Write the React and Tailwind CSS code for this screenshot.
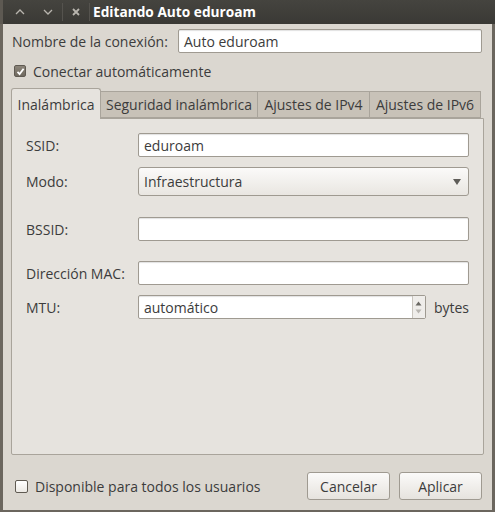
import React from 'react';

const font = { fontFamily: '"Open Sans", "Noto Sans", sans-serif' };

function TextInput({ value, className = '' }) {
  return (
    <div className={`h-[24px] bg-white border border-[#9f9a91] rounded-[2px] shadow-[inset_0_1px_1px_rgba(0,0,0,0.12)] flex items-center px-[5px] text-[#3c3c3c] ${className}`}>
      {value}
    </div>
  );
}

function Check({ checked }) {
  return checked ? (
    <div className="w-[12px] h-[12px] rounded-[2px] border border-[#5f5a52] bg-gradient-to-b from-[#8c857a] to-[#6f695f] flex items-center justify-center">
      <svg width="9" height="9" viewBox="0 0 9 9">
        <path d="M1.5 4.8 L3.6 7 L7.6 1.8" stroke="#ffffff" strokeWidth="1.8" fill="none" />
      </svg>
    </div>
  ) : (
    <div className="w-[13px] h-[13px] rounded-[2px] border border-[#5f5a52] bg-gradient-to-b from-white to-[#ece9e4]" />
  );
}

function Row({ label, children, className = '' }) {
  return (
    <div className={`flex items-center ${className}`}>
      <div className="w-[112px] shrink-0">{label}</div>
      {children}
    </div>
  );
}

export default function App() {
  return (
    <div className="w-[495px] h-[512px] flex flex-col bg-[#dbd7d0] text-[14px] text-[#3c3c3c] overflow-hidden" style={font}>
      <div className="h-[24px] shrink-0 bg-gradient-to-b from-[#45443f] to-[#3a3935] flex items-center border-l-[3px] border-[#5d5952]">
        <div className="flex items-center h-[18px] ml-[3px] text-[#b8b5ae]">
          <div className="w-[28px] flex justify-center">
            <svg width="10" height="6" viewBox="0 0 10 6"><path d="M1 5 L5 1 L9 5" stroke="currentColor" strokeWidth="1.3" fill="none" /></svg>
          </div>
          <div className="w-[28px] flex justify-center">
            <svg width="10" height="6" viewBox="0 0 10 6"><path d="M1 1 L5 5 L9 1" stroke="currentColor" strokeWidth="1.3" fill="none" /></svg>
          </div>
          <div className="w-px h-[18px] bg-[#2c2b28] border-r border-[#55534e]" />
          <div className="w-[26px] flex justify-center">
            <svg width="8" height="8" viewBox="0 0 8 8"><path d="M1 1 L7 7 M7 1 L1 7" stroke="currentColor" strokeWidth="1.8" /></svg>
          </div>
          <div className="w-px h-[18px] bg-[#2c2b28] border-r border-[#55534e]" />
        </div>
        <div className="ml-[3px] text-white font-bold text-[13.7px]">Editando Auto eduroam</div>
      </div>

      <div className="flex-1 flex flex-col border-x-[3px] border-b-[2px] border-[#6b665e] px-[8px]">
        <div className="flex items-center mt-[5px]">
          <div className="w-[167px] pl-[1px]">Nombre de la conexión:</div>
          <TextInput value="Auto eduroam" className="w-[304px]" />
        </div>
        <div className="flex items-center mt-[7px] h-[22px] pl-[3px]">
          <Check checked />
          <span className="ml-[7px]">Conectar automáticamente</span>
        </div>

        <div className="mt-[5px] flex items-end h-[31px] relative z-10">
          <div className="w-[90px] h-[31px] bg-[#e6e3de] border border-b-0 border-[#a9a49b] rounded-t-[3px] flex items-center justify-center -mb-px">Inalámbrica</div>
          <div className="w-[157px] h-[27px] bg-[#c8c2b8] border border-[#a9a49b] border-l-0 flex items-center justify-center">Seguridad inalámbrica</div>
          <div className="w-[112px] h-[27px] bg-[#c8c2b8] border border-[#a9a49b] border-l-0 flex items-center justify-center">Ajustes de IPv4</div>
          <div className="w-[111px] h-[27px] bg-[#c8c2b8] border border-[#a9a49b] border-l-0 flex items-center justify-center">Ajustes de IPv6</div>
        </div>
        <div className="w-[473px] h-[337px] bg-[#e6e3de] border border-[#a9a49b] rounded-b-[2px] px-[14px] pt-[14px]">
          <Row label="SSID:">
            <TextInput value="eduroam" className="w-[331px]" />
          </Row>
          <Row label="Modo:" className="mt-[10px]">
            <div className="w-[331px] h-[29px] bg-gradient-to-b from-[#fbfaf9] to-[#e9e6e1] border border-[#9f9a91] rounded-[3px] flex items-center px-[5px] justify-between">
              <span>Infraestructura</span>
              <svg width="10" height="8" viewBox="0 0 10 8" className="mr-[1px]"><path d="M1 1 L9 1 L5 7 Z" fill="#5f5d59" /></svg>
            </div>
          </Row>
          <Row label="BSSID:" className="mt-[21px]">
            <TextInput value="" className="w-[331px]" />
          </Row>
          <Row label="Dirección MAC:" className="mt-[20px]">
            <TextInput value="" className="w-[331px]" />
          </Row>
          <Row label="MTU:" className="mt-[10px]">
            <div className="w-[288px] h-[24px] bg-white border border-[#9f9a91] rounded-[2px] flex items-center shadow-[inset_0_1px_1px_rgba(0,0,0,0.12)]">
              <span className="flex-1 px-[5px]">automático</span>
              <div className="w-[13px] h-full border-l border-[#c9c5be] bg-[#efedea] flex flex-col items-center justify-center gap-[3px]">
                <svg width="7" height="5" viewBox="0 0 7 5"><path d="M0.5 4.5 L3.5 0.5 L6.5 4.5 Z" fill="#6a6863" /></svg>
                <svg width="7" height="5" viewBox="0 0 7 5"><path d="M0.5 0.5 L3.5 4.5 L6.5 0.5 Z" fill="#b8b5b0" /></svg>
              </div>
            </div>
            <span className="ml-[8px]">bytes</span>
          </Row>
        </div>

        <div className="flex items-center mt-[17px]">
          <div className="pl-[4px]"><Check /></div>
          <span className="ml-[7px]">Disponible para todos los usuarios</span>
          <div className="ml-auto flex gap-[9px] mr-[2px]">
            <div className="w-[83px] h-[28px] rounded-[3px] border border-[#9f9a91] bg-gradient-to-b from-[#fbfaf9] to-[#e6e3de] flex items-center justify-center">Cancelar</div>
            <div className="w-[83px] h-[28px] rounded-[3px] border border-[#9f9a91] bg-gradient-to-b from-[#fbfaf9] to-[#e6e3de] flex items-center justify-center">Aplicar</div>
          </div>
        </div>
      </div>
    </div>
  );
}
